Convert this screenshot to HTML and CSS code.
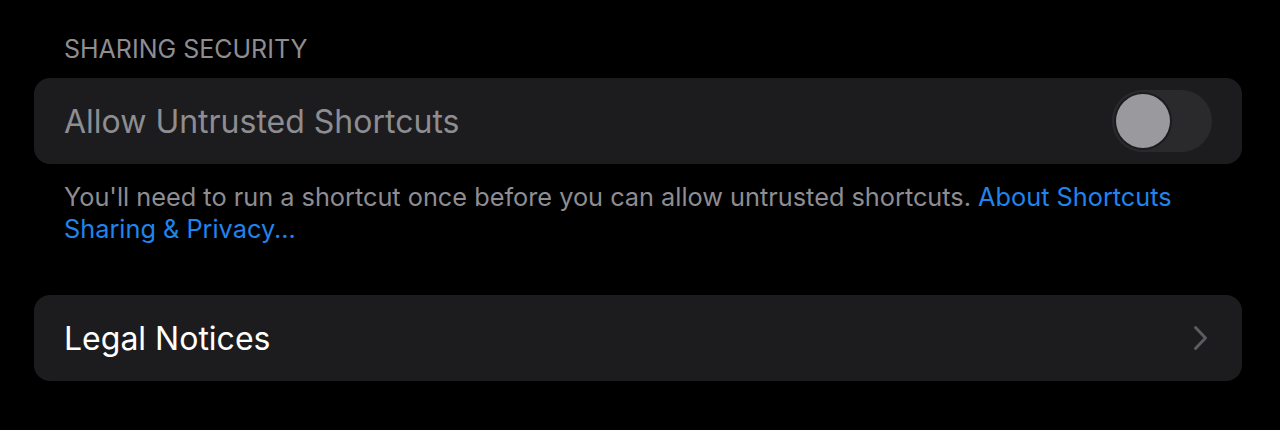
FILE: index.html
```html
<!DOCTYPE html>
<html>

<head>
    <meta name="viewport" content="width=device-width, initial-scale=1" />
    <link rel="stylesheet" href="styles.css">
</head>

<body>
    <section class="group">
        <header class="group-title">SHARING SECURITY</header>
        <div class="card">
            <span class="row-label disabled">Allow Untrusted Shortcuts</span>
            <span class="toggle"><span class="knob"></span></span>
        </div>
        <p class="group-note">
            You'll need to run a shortcut once before you can allow untrusted shortcuts.
            <a href="#">About Shortcuts Sharing &amp; Privacy...</a>
        </p>
    </section>

    <section class="group">
        <div class="card">
            <span class="row-label">Legal Notices</span>
            <svg class="chevron" width="18" height="26" viewBox="0 0 18 26">
                <path d="M3.5 2.5 L13.5 13 L3.5 23.5" fill="none" stroke="#5b5b60" stroke-width="3" stroke-linecap="round" stroke-linejoin="round" />
            </svg>
        </div>
    </section>
</body>

</html>
```

FILE: styles.css
```css
body {
    margin: 0;
    background-color: #000;
    font-family: Inter, "Liberation Sans", sans-serif;
    width: 100vw;
    height: 100vh;
    overflow: hidden;
}

.group {
    padding: 0 38px 0 34px;
}

.group-title {
    padding: 34px 30px 14px;
    font-size: 25px;
    line-height: 30px;
    color: #8d8d92;
}

.card {
    display: flex;
    align-items: center;
    justify-content: space-between;
    height: 86px;
    padding: 0 30px;
    border-radius: 16px;
    background-color: #1c1c1e;
}

.row-label {
    font-size: 32px;
    color: #fff;
}

.row-label.disabled {
    color: #8d8d92;
}

.toggle {
    display: flex;
    align-items: center;
    width: 100px;
    height: 62px;
    padding: 0 4px;
    box-sizing: border-box;
    border-radius: 31px;
    background-color: #2a2a2d;
}

.knob {
    width: 54px;
    height: 54px;
    border-radius: 50%;
    background-color: #99999e;
    box-shadow: 0 0 0 2px #1c1c1e;
}

.chevron {
    margin-right: 2px;
}

.group-note {
    margin: 0;
    padding: 17px 30px 0;
    font-size: 25.3px;
    line-height: 32px;
    color: #8d8d92;
}

.group-note a {
    color: #1f84ee;
    text-decoration: none;
}

.group + .group {
    padding-top: 50px;
}
```
